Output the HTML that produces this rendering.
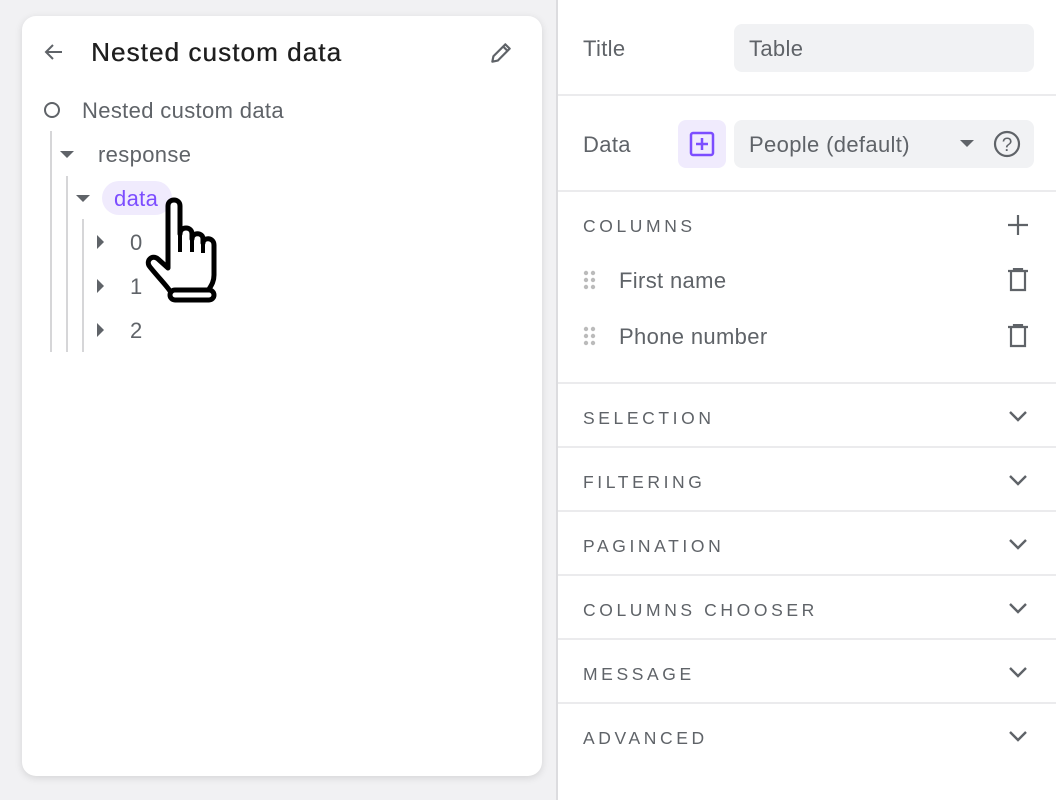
<!DOCTYPE html>
<html><head><style>
*{margin:0;padding:0;box-sizing:border-box}
body{width:1056px;height:800px;background:#f1f1f3;font-family:"Liberation Sans",sans-serif;position:relative;overflow:hidden;color:#5f6368}
.card{position:absolute;left:22px;top:16px;width:520px;height:760px;background:#fff;border-radius:14px;box-shadow:0 2px 8px rgba(0,0,0,.12)}
.right{position:absolute;left:556px;top:0;width:500px;height:800px;background:#fff;border-left:2px solid #dcdcdf}
.abs{position:absolute}
.t{font-size:22px;color:#1f1f1f}
.n{font-size:22px;color:#5f6368;letter-spacing:0.35px}
.hr{position:absolute;left:0;right:0;height:2px;background:#ebebed}
.sec{position:absolute;left:25px;font-size:17.5px;letter-spacing:3.6px;color:#5f6368}
.vl{position:absolute;width:2px;background:#d6d6d8}
</style></head><body>
<div class="card">
 <svg class="abs" style="left:20px;top:24px" width="24" height="24" viewBox="0 0 24 24"><path d="M20 12H5M11 5l-7 7 7 7" stroke="#5f6368" stroke-width="2" fill="none"/></svg>
 <div class="abs t" style="left:69px;top:21px;font-size:26px;letter-spacing:1.1px;text-shadow:0.4px 0 0 #1f1f1f">Nested custom data</div>
 <svg class="abs" style="left:466px;top:24px" width="26" height="26" viewBox="0 0 24 24"><path d="M4 20l1-5L16 4l4 4L9 19z M14 6l4 4" stroke="#5f6368" stroke-width="2" fill="none" stroke-linejoin="round"/></svg>
 <svg class="abs" style="left:20px;top:84px" width="20" height="20"><circle cx="10" cy="10" r="7" stroke="#5f6368" stroke-width="2" fill="none"/></svg>
 <div class="abs n" style="left:60px;top:82px">Nested custom data</div>
 <div class="vl" style="left:28px;top:115px;height:221px"></div>
 <svg class="abs" style="left:38px;top:134px" width="14" height="10"><path d="M0 1h14L7 8z" fill="#5f6368"/></svg>
 <div class="abs n" style="left:76px;top:126px">response</div>
 <div class="vl" style="left:44px;top:160px;height:176px"></div>
 <svg class="abs" style="left:54px;top:178px" width="14" height="10"><path d="M0 1h14L7 8z" fill="#5f6368"/></svg>
 <div class="abs" style="left:80px;top:165px;width:70px;height:34px;border-radius:17px;background:#f0ebfd"></div>
 <div class="abs n" style="left:92px;top:170px;color:#7c4dff">data</div>
 <div class="vl" style="left:60px;top:203px;height:133px"></div>
 <svg class="abs" style="left:74px;top:219px" width="10" height="14"><path d="M1 0v14l7-7z" fill="#5f6368"/></svg>
 <div class="abs n" style="left:108px;top:214px">0</div>
 <svg class="abs" style="left:74px;top:263px" width="10" height="14"><path d="M1 0v14l7-7z" fill="#5f6368"/></svg>
 <div class="abs n" style="left:108px;top:258px">1</div>
 <svg class="abs" style="left:74px;top:307px" width="10" height="14"><path d="M1 0v14l7-7z" fill="#5f6368"/></svg>
 <div class="abs n" style="left:108px;top:302px">2</div>
 <svg class="abs" style="left:120px;top:178px" width="80" height="110" viewBox="0 0 80 110"><path d="M26 50V12c0-8 12-8 12 0v28c0-8 12-8 12 0v5c0-7 11-7 11 0v4c0-6 11-6 11 2v30c0 8-4 12-6 16H28c-4-6-12-14-20-24-5-6 2-13 8-8l10 9z" fill="#fff" stroke="#000" stroke-width="5" stroke-linejoin="round"/><rect x="28" y="96" width="44" height="10" rx="5" fill="#fff" stroke="#000" stroke-width="5"/><path d="M38 40v18M50 45v13M61 49v10" stroke="#000" stroke-width="4"/></svg>
</div>
<div class="right">
 <div class="abs n" style="left:25px;top:36px">Title</div>
 <div class="abs" style="left:176px;top:24px;width:300px;height:48px;border-radius:8px;background:#f1f2f4"></div>
 <div class="abs n" style="left:191px;top:36px">Table</div>
 <div class="hr" style="top:94px"></div>
 <div class="abs n" style="left:25px;top:132px">Data</div>
 <div class="abs" style="left:120px;top:120px;width:48px;height:48px;border-radius:8px;background:#f0ebfd"></div>
 <svg class="abs" style="left:131px;top:131px" width="26" height="26"><rect x="2" y="2" width="22" height="22" rx="2" stroke="#7c4dff" stroke-width="2.5" fill="none"/><path d="M13 7v12M7 13h12" stroke="#7c4dff" stroke-width="2.5"/></svg>
 <div class="abs" style="left:176px;top:120px;width:300px;height:48px;border-radius:8px;background:#f1f2f4"></div>
 <div class="abs n" style="left:191px;top:132px;color:#5f6368">People (default)</div>
 <svg class="abs" style="left:402px;top:140px" width="14" height="8"><path d="M0 0h14L7 7z" fill="#5f6368"/></svg>
 <svg class="abs" style="left:435px;top:130px" width="28" height="28"><circle cx="14" cy="14" r="12" stroke="#5f6368" stroke-width="2.2" fill="none"/><text x="14" y="21" text-anchor="middle" font-size="19" fill="#5f6368" font-family="Liberation Sans">?</text></svg>
 <div class="hr" style="top:190px"></div>
 <div class="sec" style="top:216px">COLUMNS</div>
 <svg class="abs" style="left:448px;top:213px" width="24" height="24"><path d="M12 2v20M2 12h20" stroke="#5f6368" stroke-width="2.2"/></svg>
 <svg class="abs" style="left:25px;top:270px" width="14" height="20" fill="#bbb"><circle cx="3" cy="3" r="2.2"/><circle cx="10" cy="3" r="2.2"/><circle cx="3" cy="10" r="2.2"/><circle cx="10" cy="10" r="2.2"/><circle cx="3" cy="17" r="2.2"/><circle cx="10" cy="17" r="2.2"/></svg>
 <div class="abs n" style="left:61px;top:268px">First name</div>
 <svg class="abs" style="left:449px;top:268px" width="22" height="24"><path d="M1 3h20M7 3V1h8v2M4 3v19h14V3" stroke="#5f6368" stroke-width="2.2" fill="none"/></svg>
 <svg class="abs" style="left:25px;top:326px" width="14" height="20" fill="#bbb"><circle cx="3" cy="3" r="2.2"/><circle cx="10" cy="3" r="2.2"/><circle cx="3" cy="10" r="2.2"/><circle cx="10" cy="10" r="2.2"/><circle cx="3" cy="17" r="2.2"/><circle cx="10" cy="17" r="2.2"/></svg>
 <div class="abs n" style="left:61px;top:324px">Phone number</div>
 <svg class="abs" style="left:449px;top:324px" width="22" height="24"><path d="M1 3h20M7 3V1h8v2M4 3v19h14V3" stroke="#5f6368" stroke-width="2.2" fill="none"/></svg>
 <div class="hr" style="top:382px"></div>
 <div class="sec" style="top:408px">SELECTION</div>
 <div class="hr" style="top:446px"></div>
 <div class="sec" style="top:472px">FILTERING</div>
 <div class="hr" style="top:510px"></div>
 <div class="sec" style="top:536px">PAGINATION</div>
 <div class="hr" style="top:574px"></div>
 <div class="sec" style="top:600px">COLUMNS CHOOSER</div>
 <div class="hr" style="top:638px"></div>
 <div class="sec" style="top:664px">MESSAGE</div>
 <div class="hr" style="top:702px"></div>
 <div class="sec" style="top:728px">ADVANCED</div>
 <svg class="abs" style="left:450px;top:410px" width="20" height="12"><path d="M2 2l8 8 8-8" stroke="#5f6368" stroke-width="2.4" fill="none"/></svg>
 <svg class="abs" style="left:450px;top:474px" width="20" height="12"><path d="M2 2l8 8 8-8" stroke="#5f6368" stroke-width="2.4" fill="none"/></svg>
 <svg class="abs" style="left:450px;top:538px" width="20" height="12"><path d="M2 2l8 8 8-8" stroke="#5f6368" stroke-width="2.4" fill="none"/></svg>
 <svg class="abs" style="left:450px;top:602px" width="20" height="12"><path d="M2 2l8 8 8-8" stroke="#5f6368" stroke-width="2.4" fill="none"/></svg>
 <svg class="abs" style="left:450px;top:666px" width="20" height="12"><path d="M2 2l8 8 8-8" stroke="#5f6368" stroke-width="2.4" fill="none"/></svg>
 <svg class="abs" style="left:450px;top:730px" width="20" height="12"><path d="M2 2l8 8 8-8" stroke="#5f6368" stroke-width="2.4" fill="none"/></svg>
</div>
</body></html>
